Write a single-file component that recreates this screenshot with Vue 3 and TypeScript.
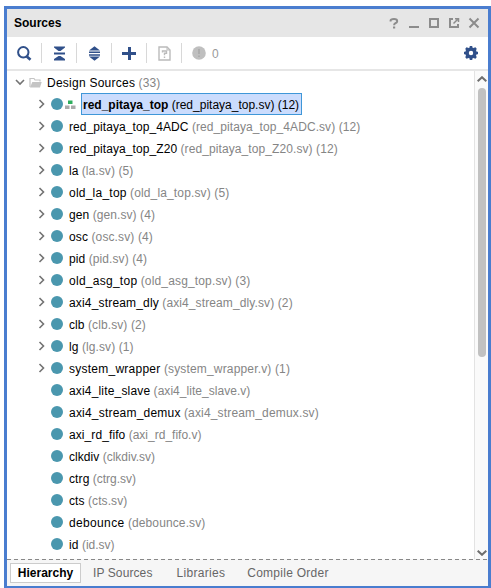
<script setup lang="ts">
interface SourceNode {
  name: string
  file: string
  count?: number
  top?: boolean
  // letter spacing in px for the name and for the file detail
  spacing: [number, number]
}

const sources: SourceNode[] = [
  { name: 'red_pitaya_top', file: 'red_pitaya_top.sv', count: 12, top: true, spacing: [0, 0] },
  { name: 'red_pitaya_top_4ADC', file: 'red_pitaya_top_4ADC.sv', count: 12, spacing: [0.08, 0.08] },
  { name: 'red_pitaya_top_Z20', file: 'red_pitaya_top_Z20.sv', count: 12, spacing: [0.08, 0.09] },
  { name: 'la', file: 'la.sv', count: 5, spacing: [0, 0.1] },
  { name: 'old_la_top', file: 'old_la_top.sv', count: 5, spacing: [0.23, 0.14] },
  { name: 'gen', file: 'gen.sv', count: 4, spacing: [0.1, 0.08] },
  { name: 'osc', file: 'osc.sv', count: 4, spacing: [0.15, 0.12] },
  { name: 'pid', file: 'pid.sv', count: 4, spacing: [0.1, 0.1] },
  { name: 'old_asg_top', file: 'old_asg_top.sv', count: 3, spacing: [0.27, 0.15] },
  { name: 'axi4_stream_dly', file: 'axi4_stream_dly.sv', count: 2, spacing: [0.17, 0.11] },
  { name: 'clb', file: 'clb.sv', count: 2, spacing: [0.1, 0.1] },
  { name: 'lg', file: 'lg.sv', count: 1, spacing: [0.1, 0.1] },
  { name: 'system_wrapper', file: 'system_wrapper.v', count: 1, spacing: [0.25, 0.16] },
  { name: 'axi4_lite_slave', file: 'axi4_lite_slave.v', spacing: [0.17, 0.04] },
  { name: 'axi4_stream_demux', file: 'axi4_stream_demux.sv', spacing: [0.21, 0.16] },
  { name: 'axi_rd_fifo', file: 'axi_rd_fifo.v', spacing: [0.09, 0] },
  { name: 'clkdiv', file: 'clkdiv.sv', spacing: [0.05, 0] },
  { name: 'ctrg', file: 'ctrg.sv', spacing: [0.1, 0] },
  { name: 'cts', file: 'cts.sv', spacing: [0.1, 0.08] },
  { name: 'debounce', file: 'debounce.sv', spacing: [0.35, 0.12] },
  { name: 'id', file: 'id.sv', spacing: [0.1, 0] },
]

const detail = (s: SourceNode): string =>
  s.count === undefined ? `(${s.file})` : `(${s.file}) (${s.count})`
</script>

<template>
  <div class="page">
    <section class="panel">
      <header class="titlebar">
        <h1>Sources</h1>
        <div class="window-actions">
          <svg width="20" height="20" viewBox="0 0 20 20"><path d="M6.600 8.400V7.600Q6.600 6 10 6Q13.200 6 13.200 8.200Q13.200 9.500 11.400 10.200Q10.100 10.800 10.100 12.200" /><path d="M9 14.500h2.200" /></svg>
          <svg width="20" height="20" viewBox="0 0 20 20"><path d="M5 14h10" /></svg>
          <svg width="20" height="20" viewBox="0 0 20 20"><path d="M6 6h8v8H6z" /></svg>
          <svg width="20" height="20" viewBox="0 0 20 20"><path d="M9 6H6v8h8v-3" /><path class="thin" d="M9.500 10.500l4-4M11 5.800h3.500V9" /></svg>
          <svg width="20" height="20" viewBox="0 0 20 20"><path d="M5.500 5.500l9 9M14.500 5.500l-9 9" /></svg>
        </div>
      </header>

      <div class="toolbar">
        <span class="tool"><svg width="17" height="17" viewBox="0 0 17 17"><circle cx="7.300" cy="7.300" r="5.200" fill="none" stroke="#30508a" stroke-width="2" /><path d="M10.800 11.500l3.700 3.200" stroke="#30508a" stroke-width="2.800" /></svg></span>
        <span class="tool"><svg width="17" height="17" viewBox="0 0 17 17" fill="#30508a"><path d="M3 1.500h11v1L9.500 6h-2L3 2.500zM3 7.500h11v2H3zM7.500 11h2L14 14v1.500H3V14z" /></svg></span>
        <span class="tool"><svg width="17" height="17" viewBox="0 0 17 17" fill="#30508a"><path d="M8.500 1.300L14 5.500H3zM3 6.500h11v1.500H3zM3 9.300h11v1.500H3zM3 11.500h11L8.500 15.700z" /></svg></span>
        <span class="tool"><svg width="17" height="17" viewBox="0 0 17 17" fill="#30508a"><path d="M7 2h3v5h5v3h-5v5H7v-5H1V7h6z" /></svg></span>
        <span class="tool"><svg width="17" height="17" viewBox="0 0 17 17" fill="none" stroke="#bbb"><path d="M3 2h8l3 3v10H3z" stroke-width="1.400" /><path d="M11 2v3h3" /><path d="M6.500 7.500V6h4v2.300h-2v2M8.500 11.500v1.400" stroke-width="1.400" /></svg></span>
        <span class="messages">
          <svg width="14" height="14" viewBox="0 0 14 14"><circle cx="7" cy="7" r="6.800" fill="#bfbfbf" /><path d="M7 3v5M7 9.500V11" stroke="#adadad" stroke-width="2" /></svg>
          <span class="zero">0</span>
        </span>
        <svg class="gear" width="16" height="16" viewBox="0 0 16 16" fill="none" stroke="#30508a"><circle cx="8" cy="8" r="4" stroke-width="3.600" /><path d="M8 1v3M8 12v3M1 8h3M12 8h3M3 3l2 2M11 11l2 2M13 3l-2 2M5 11l-2 2" stroke-width="2.600" /></svg>
      </div>

      <div class="body">
        <div class="tree">
          <div class="row root">
            <svg class="chevron" width="10" height="10" viewBox="0 0 10 10"><path d="M1 3l4 4 4-4" /></svg>
            <svg class="folder" width="13" height="11" viewBox="0 0 13 11"><path d="M1 10V1.500h4l1 1.500h5v1.500" fill="none" stroke="#c4c4c4" stroke-width="1.200" /><path d="M3.300 5H12.700L11 10.500H1z" fill="#c4c4c4" /></svg>
            <span class="label"><span class="name">Design Sources</span> <span class="file">(33)</span></span>
          </div>
          <div v-for="s in sources" :key="s.name" class="row child" :class="{ selected: s.top }">
            <span class="toggle"><svg v-if="s.count !== undefined" class="chevron" width="8" height="10" viewBox="0 0 8 10"><path d="M1.500 1L5.500 5 1.500 9" /></svg></span>
            <span class="dot"></span>
            <svg v-if="s.top" class="hierarchy" width="11" height="9" viewBox="0 0 11 9"><path d="M3 .5h4.500V4H3z" fill="#2fae5e" /><path d="M0 5.500h4.500V9H0zM6 5.500h4.500V9H6z" fill="#aaa" /></svg>
            <span class="label"><span class="name" :style="{ letterSpacing: s.spacing[0] + 'px' }">{{ s.name }}</span> <span class="file" :style="{ letterSpacing: s.spacing[1] + 'px' }">{{ detail(s) }}</span></span>
          </div>
        </div>
        <div class="scrollbar">
          <svg width="10" height="6" viewBox="0 0 10 6"><path d="M.7 5.200L5 1.200l4.300 4" /></svg>
          <span class="thumb"></span>
          <svg class="down" width="10" height="6" viewBox="0 0 10 6"><path d="M.7 .8L5 4.800l4.300-4" /></svg>
        </div>
      </div>
      <div class="divider"></div>

      <nav class="tabs">
        <span class="tab active">Hierarchy</span>
        <span class="tab ip">IP Sources</span>
        <span class="tab lib">Libraries</span>
        <span class="tab order">Compile Order</span>
      </nav>
    </section>
  </div>
</template>

<style>
body { background: #fff; }
</style>

<style scoped>
.page { box-sizing: border-box; width: 491px; height: 588px; padding: 6px 0 0 4px; font: 12px/22px "Liberation Sans", Arial, sans-serif; color: #000; overflow: hidden; }
.panel { box-sizing: border-box; height: 582px; border: 3px solid #4a7dcf; border-bottom-width: 2px; display: flex; flex-direction: column; background: #fff; }
.titlebar { height: 28px; flex: none; background: #e6e6e6; display: flex; align-items: center; justify-content: space-between; padding: 0 4px 0 7px; }
h1 { margin: 0; font-size: 12px; line-height: 26px; font-weight: bold; }
.window-actions { display: flex; }
.window-actions svg { display: block; fill: none; stroke: #8c8c8c; stroke-width: 2; }
.window-actions .thin { stroke-width: 1.5; }
.toolbar { height: 32px; flex: none; border-bottom: 2px solid #e6e6e6; display: flex; align-items: center; }
.tool { width: 34px; height: 20px; display: flex; align-items: center; justify-content: center; border-right: 1px solid #d8d8d8; }
.tool svg { display: block; }
.messages { display: flex; align-items: center; gap: 6px; margin-left: 10px; color: #999; }
.zero { padding-top: 1px; }
.gear { margin-left: auto; margin-right: 9px; }
.body { flex: 1; min-height: 0; display: flex; }
.divider { height: 1px; flex: none; background: repeating-linear-gradient(90deg, #888 0 4px, #f6f6f6 4px 7px); }
.tree { flex: 1; min-width: 0; overflow: hidden; }
.row { height: 22px; display: flex; align-items: center; white-space: nowrap; }
.root { padding-left: 8px; }
.root .label { padding-top: 2px; line-height: 20px; }
.root .name { letter-spacing: .25px; }
.root .file { letter-spacing: .1px; }
.child { padding-left: 30px; }
.chevron { display: block; fill: none; stroke: #737373; stroke-width: 1.6; }
.folder { margin: 0 5px 0 4px; }
.toggle { width: 14px; padding-left: 1px; box-sizing: border-box; }
.dot { width: 12px; height: 12px; border-radius: 50%; background: #4a97ae; margin-right: 6px; }
.child .label { line-height: 22px; padding-top: 1px; }
.hierarchy { margin: 0 5px 0 -4px; }
.file { color: #858585; }
.child.selected .label { box-sizing: border-box; height: 22px; padding: 0 2px 0 1px; border: 1px solid #3f97d8; background: #cbdcfd; }
.selected .name { font-weight: bold; }
.selected .file { color: #000; }
.scrollbar { width: 14px; box-sizing: border-box; border-left: 1px solid #e3e3e3; background: #fafafa; display: flex; flex-direction: column; align-items: center; padding: 5px 0 3px; }
.scrollbar svg { fill: none; stroke: #6e6e6e; stroke-width: 2; flex: none; }
.thumb { width: 8px; height: 269px; border-radius: 4px; background: #c1c1c1; margin-top: 6px; }
.down { margin-top: auto; }
.tabs { height: 26px; flex: none; box-sizing: border-box; background: #f6f6f6; color: #666; display: flex; padding: 3px; }
.tab { line-height: 21px; }
.active { box-sizing: border-box; width: 71px; height: 20px; line-height: 19px; text-align: center; border: 1px solid #ccc; background: #fff; color: #000; font-weight: bold; }
.ip { margin-left: 12px; letter-spacing: .1px; }
.lib { margin-left: 24px; letter-spacing: .3px; }
.order { margin-left: 22px; letter-spacing: .27px; }
</style>
